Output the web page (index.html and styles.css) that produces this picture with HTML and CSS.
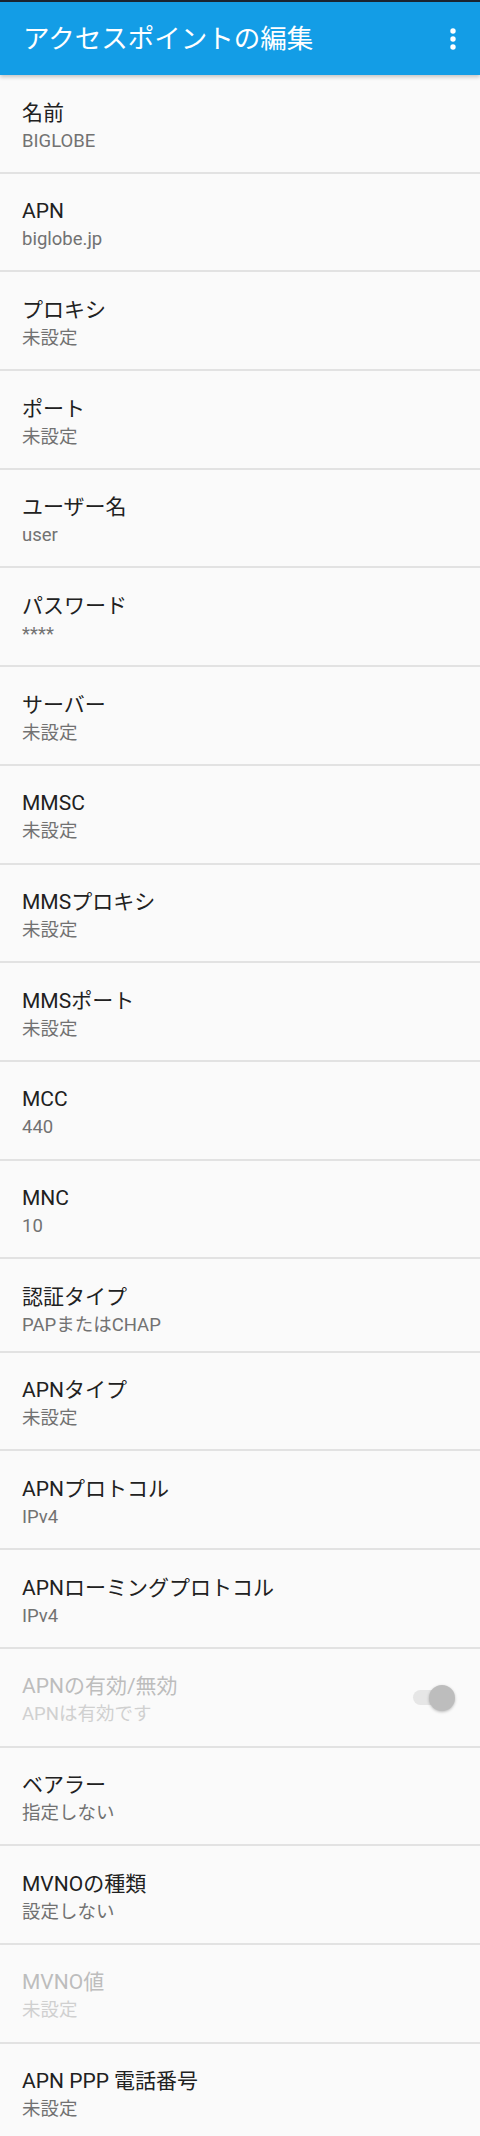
FILE: index.html
```html
<!DOCTYPE html>
<html lang="ja">
<head>
<meta charset="utf-8">
<title>アクセスポイントの編集</title>
<link rel="stylesheet" href="styles.css">
</head>
<body>
<header class="appbar">
  <h1 class="appbar-title">アクセスポイントの編集</h1>
  <svg class="appbar-menu" width="24" height="24" viewBox="0 0 24 24" aria-hidden="true">
    <circle cx="12" cy="4" r="2.7" fill="#fff"/>
    <circle cx="12" cy="12" r="2.7" fill="#fff"/>
    <circle cx="12" cy="20" r="2.7" fill="#fff"/>
  </svg>
</header>
<main class="list">
  <div class="row"><div class="text"><div class="title">名前</div><div class="summary">BIGLOBE</div></div></div>
  <div class="row"><div class="text"><div class="title">APN</div><div class="summary">biglobe.jp</div></div></div>
  <div class="row"><div class="text"><div class="title">プロキシ</div><div class="summary">未設定</div></div></div>
  <div class="row"><div class="text"><div class="title">ポート</div><div class="summary">未設定</div></div></div>
  <div class="row"><div class="text"><div class="title">ユーザー名</div><div class="summary">user</div></div></div>
  <div class="row"><div class="text"><div class="title">パスワード</div><div class="summary">****</div></div></div>
  <div class="row"><div class="text"><div class="title">サーバー</div><div class="summary">未設定</div></div></div>
  <div class="row"><div class="text"><div class="title">MMSC</div><div class="summary">未設定</div></div></div>
  <div class="row"><div class="text"><div class="title">MMSプロキシ</div><div class="summary">未設定</div></div></div>
  <div class="row"><div class="text"><div class="title">MMSポート</div><div class="summary">未設定</div></div></div>
  <div class="row"><div class="text"><div class="title">MCC</div><div class="summary">440</div></div></div>
  <div class="row"><div class="text"><div class="title">MNC</div><div class="summary">10</div></div></div>
  <div class="row row-short"><div class="text"><div class="title">認証タイプ</div><div class="summary">PAPまたはCHAP</div></div></div>
  <div class="row"><div class="text"><div class="title">APNタイプ</div><div class="summary">未設定</div></div></div>
  <div class="row"><div class="text"><div class="title">APNプロトコル</div><div class="summary">IPv4</div></div></div>
  <div class="row"><div class="text"><div class="title">APNローミングプロトコル</div><div class="summary">IPv4</div></div></div>
  <div class="row row-disabled"><div class="text"><div class="title">APNの有効/無効</div><div class="summary">APNは有効です</div></div><span class="switch"><span class="switch-track"></span><span class="switch-thumb"></span></span></div>
  <div class="row"><div class="text"><div class="title">ベアラー</div><div class="summary">指定しない</div></div></div>
  <div class="row"><div class="text"><div class="title">MVNOの種類</div><div class="summary">設定しない</div></div></div>
  <div class="row row-disabled"><div class="text"><div class="title">MVNO値</div><div class="summary">未設定</div></div></div>
  <div class="row"><div class="text"><div class="title">APN PPP 電話番号</div><div class="summary">未設定</div></div></div>
</main>
</body>
</html>
```
FILE: styles.css
```css
* {
  box-sizing: border-box;
}

html, body {
  margin: 0;
  padding: 0;
}

body {
  background: #fafafa;
  font-family: Roboto, "Noto Sans CJK JP", sans-serif;
  color: #212121;
}

.appbar {
  position: relative;
  z-index: 1;
  height: 75px;
  border-top: 2px solid #1a2431;
  background: #139de6;
  display: flex;
  align-items: center;
  padding: 0 15px 0 23px;
  box-shadow: 0 2px 4px rgba(0, 0, 0, 0.22);
}

.appbar-title {
  flex: 1;
  margin: 0;
  font-size: 26.5px;
  line-height: 32px;
  font-weight: 400;
  color: #ffffff;
  padding-top: 1px;
}

.appbar-menu {
  display: block;
  flex: none;
}

.list {
  display: flex;
  flex-direction: column;
}

.row {
  display: flex;
  align-items: center;
  height: 98.7px;
  padding: 22.6px 25px 19.1px 22px;
  border-bottom: 2px solid #e2e2e2;
}

.row-short {
  height: 93.5px;
  padding-bottom: 13.9px;
}

.text {
  flex: 1;
  min-width: 0;
  align-self: flex-start;
}

.title {
  font-size: 21px;
  line-height: 30px;
  color: #212121;
  white-space: nowrap;
}

.summary {
  margin-top: 1px;
  font-size: 18.5px;
  line-height: 24px;
  color: #727272;
  white-space: nowrap;
}

.row-disabled .title {
  color: #bdbdbd;
}

.row-disabled .summary {
  color: #d0d0d0;
}

.switch {
  position: relative;
  flex: none;
  width: 42px;
  height: 26px;
  margin-top: -2px;
}

.switch-track {
  position: absolute;
  left: 0;
  top: 5.5px;
  width: 38px;
  height: 15px;
  border-radius: 7.5px;
  background: #e6e6e6;
}

.switch-thumb {
  position: absolute;
  right: 0;
  top: 0;
  width: 26px;
  height: 26px;
  border-radius: 50%;
  background: #bdbdbd;
  box-shadow: 0 1px 3px rgba(0, 0, 0, 0.25);
}
```
